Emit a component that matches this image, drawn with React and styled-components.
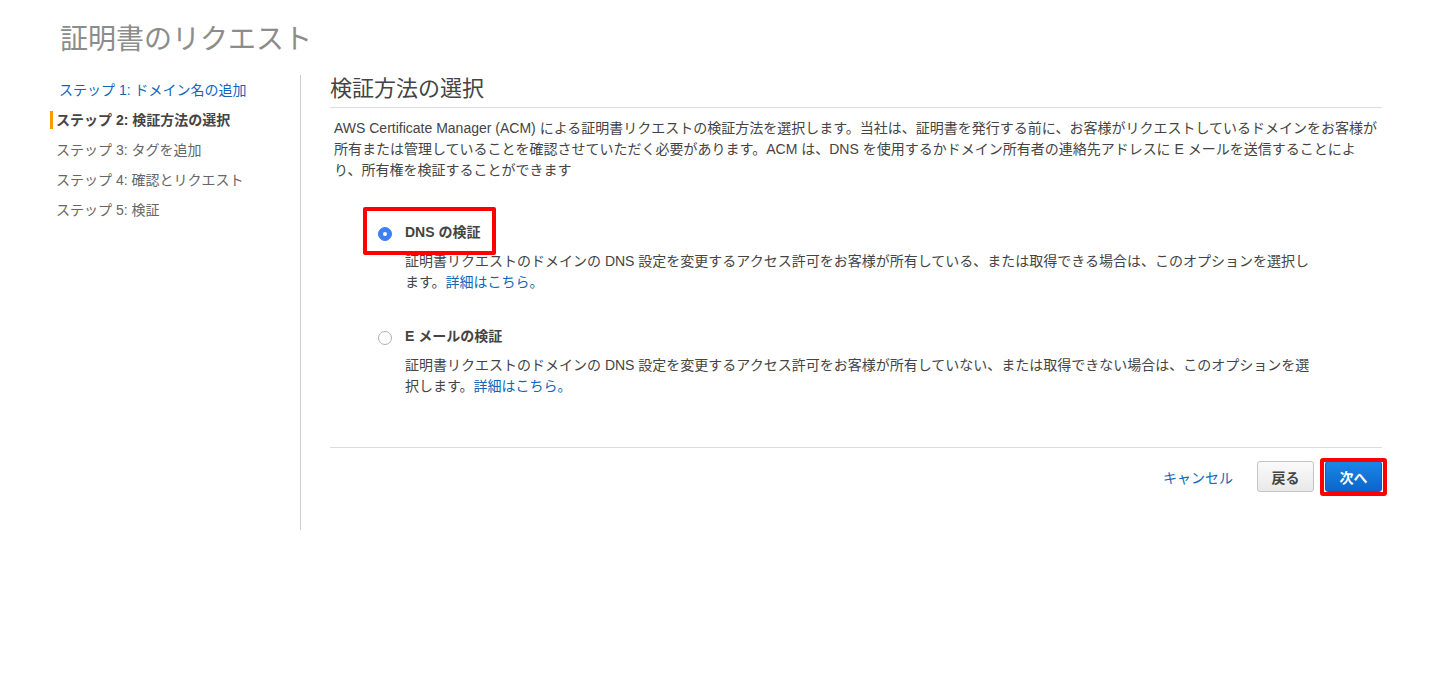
import styled, { createGlobalStyle } from "styled-components";

const GlobalStyle = createGlobalStyle`
	body {
		margin: 0;
		background: #ffffff;
		font-family: "Liberation Sans", "Noto Sans CJK JP", sans-serif;
		color: #444444;
	}
`;

const steps = [
	{ label: "ステップ 1: ドメイン名の追加", state: "done" },
	{ label: "ステップ 2: 検証方法の選択", state: "active" },
	{ label: "ステップ 3: タグを追加", state: "todo" },
	{ label: "ステップ 4: 確認とリクエスト", state: "todo" },
	{ label: "ステップ 5: 検証", state: "todo" },
];

const options = [
	{
		title: "DNS の検証",
		checked: true,
		text: "証明書リクエストのドメインの DNS 設定を変更するアクセス許可をお客様が所有している、または取得できる場合は、このオプションを選択します。",
	},
	{
		title: "E メールの検証",
		checked: false,
		text: "証明書リクエストのドメインの DNS 設定を変更するアクセス許可をお客様が所有していない、または取得できない場合は、このオプションを選択します。",
	},
];

export default function App() {
	return (
		<>
			<GlobalStyle />
			<Page>
				<PageTitle>証明書のリクエスト</PageTitle>
				<Wizard>
					<StepNav>
						{steps.map((s) => (
							<StepItem key={s.label} state={s.state}>
								{s.label}
							</StepItem>
						))}
					</StepNav>
					<Main>
						<SectionTitle>検証方法の選択</SectionTitle>
						<Intro>
							AWS Certificate Manager (ACM) による証明書リクエストの検証方法を選択します。当社は、証明書を発行する前に、お客様がリクエストしているドメインをお客様が所有または管理していることを確認させていただく必要があります。ACM は、DNS を使用するかドメイン所有者の連絡先アドレスに E メールを送信することにより、所有権を検証することができます
						</Intro>
						<OptionList>
							{options.map((o) => (
								<Option key={o.title}>
									<OptionHead>
										<Radio checked={o.checked} />
										<OptionLabel>{o.title}</OptionLabel>
										{o.checked && <Highlight />}
									</OptionHead>
									<OptionText>
										{o.text}
										<Link>詳細はこちら。</Link>
									</OptionText>
								</Option>
							))}
						</OptionList>
						<Footer>
							<CancelLink>キャンセル</CancelLink>
							<Button>戻る</Button>
							<ButtonWrap>
								<Button primary>次へ</Button>
								<ButtonHighlight />
							</ButtonWrap>
						</Footer>
					</Main>
				</Wizard>
			</Page>
		</>
	);
}

const Page = styled.div`
	padding: 20px 58px 0 50px;
`;

const PageTitle = styled.h1`
	margin: 0 0 15px 10px;
	font-size: 28px;
	line-height: 40px;
	font-weight: 400;
	color: #8c8c8c;
`;

const Wizard = styled.div`
	display: flex;
	align-items: stretch;
`;

const StepNav = styled.ul`
	list-style: none;
	margin: 0;
	padding: 0;
	width: 250px;
	border-right: 1px solid #cccccc;
	flex-shrink: 0;
`;

const StepItem = styled.li`
	height: 30px;
	line-height: 30px;
	font-size: 14px;
	padding-left: ${(p) => (p.state === "done" ? "6px" : "3px")};
	border-left: 3px solid transparent;
	color: ${(p) =>
		p.state === "done" ? "#1166bb" : p.state === "active" ? "#444444" : "#666666"};
	font-weight: ${(p) => (p.state === "active" ? 700 : 400)};
	${(p) =>
		p.state === "active" &&
		`
		border-left-color: #ff9900;
		height: 18px;
		line-height: 18px;
		margin: 6px 0;
	`}
`;

const Main = styled.div`
	flex: 1;
	padding: 0 0 38px 29px;
`;

const SectionTitle = styled.h2`
	margin: 0;
	font-size: 22px;
	line-height: 28px;
	font-weight: 400;
	color: #444444;
	padding: 0 0 4px;
	border-bottom: 1px solid #dddddd;
`;

const Intro = styled.p`
	margin: 10px 0 0 4px;
	font-size: 14px;
	line-height: 21px;
	color: #444444;
`;

const OptionList = styled.div`
	display: flex;
	flex-direction: column;
	gap: 32px;
	padding: 40px 0 0 48px;
`;

const Option = styled.div`
	display: flex;
	flex-direction: column;
`;

const OptionHead = styled.div`
	position: relative;
	display: flex;
	align-items: center;
	gap: 13px;
	height: 20px;
`;

const Radio = styled.span`
	box-sizing: border-box;
	width: 14px;
	height: 14px;
	margin-top: 5px;
	border-radius: 50%;
	flex-shrink: 0;
	background: ${(p) => (p.checked ? "#3d7ff5" : "#ffffff")};
	border: 1px solid ${(p) => (p.checked ? "#3d7ff5" : "#b0b0b0")};
	display: flex;
	align-items: center;
	justify-content: center;
	&::after {
		content: "";
		width: 4px;
		height: 4px;
		border-radius: 50%;
		background: ${(p) => (p.checked ? "#ffffff" : "transparent")};
	}
`;

const OptionLabel = styled.span`
	font-size: 14px;
	font-weight: 700;
	color: #444444;
`;

const Highlight = styled.span`
	position: absolute;
	left: -15px;
	top: -14px;
	width: 133px;
	height: 48px;
	box-sizing: border-box;
	border: 4px solid #ff0000;
	border-radius: 2px;
	pointer-events: none;
`;

const OptionText = styled.p`
	margin: 10px 0 0 27px;
	width: 905px;
	font-size: 14px;
	line-height: 21px;
	color: #444444;
`;

const Link = styled.a`
	color: #1166bb;
	cursor: pointer;
`;

const Footer = styled.div`
	display: flex;
	justify-content: flex-end;
	align-items: center;
	margin-top: 50px;
	padding-top: 13px;
	border-top: 1px solid #dddddd;
`;

const CancelLink = styled.a`
	font-size: 14px;
	color: #1166bb;
	margin-right: 24px;
	cursor: pointer;
`;

const ButtonWrap = styled.div`
	position: relative;
	margin-left: 11px;
`;

const Button = styled.button`
	box-sizing: border-box;
	height: 31px;
	min-width: 57px;
	padding: 0 12px;
	font-family: "Liberation Sans", "Noto Sans CJK JP", sans-serif;
	font-size: 14px;
	font-weight: 700;
	border-radius: 3px;
	cursor: pointer;
	color: ${(p) => (p.primary ? "#ffffff" : "#444444")};
	background: ${(p) =>
		p.primary
			? "linear-gradient(#1a86e8, #0a66c9)"
			: "linear-gradient(#fafafa, #e9e9e9)"};
	border: 1px solid ${(p) => (p.primary ? "#0a5db8" : "#c4c4c4")};
`;

const ButtonHighlight = styled.span`
	position: absolute;
	left: -5px;
	top: -3px;
	right: -5px;
	bottom: -4px;
	border: 4px solid #ff0000;
	border-radius: 3px;
	pointer-events: none;
`;
